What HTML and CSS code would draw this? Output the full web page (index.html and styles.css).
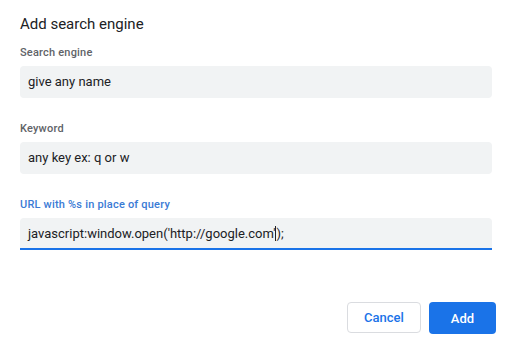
FILE: index.html
```html
<!DOCTYPE html>
<html lang="en">
<head>
    <meta charset="UTF-8">
    <meta name="viewport" content="width=device-width, initial-scale=1.0">
    <title>Add search engine</title>
    <link rel="stylesheet" href="styles.css">
</head>
<body>
    <div class="dialog">
        <h1 class="title">Add search engine</h1>

        <!-- Fields -->
        <div class="field">
            <label class="label">Search engine</label>
            <div class="input">give any name</div>
        </div>
        <div class="field">
            <label class="label">Keyword</label>
            <div class="input">any key ex: q or w</div>
        </div>
        <div class="field focused">
            <label class="label">URL with %s in place of query</label>
            <div class="input">javascript:window.open('http://google.com'<span class="caret"></span>);</div>
        </div>

        <!-- Buttons -->
        <div class="actions">
            <button class="btn cancel">Cancel</button>
            <button class="btn add">Add</button>
        </div>
    </div>
</body>
</html>
```

FILE: styles.css
```css
body { margin: 0; background: #fff; font-family: Roboto, "Liberation Sans", Arial, sans-serif; color: #202124; }
.dialog { padding: 14px 14px 13px 20px; }
.title { margin: 0 0 13px; font-size: 15px; line-height: 20px; font-weight: 400; color: #202124; }
.field { margin-bottom: 25px; margin-right: 0; width: 472px; }
.label { display: block; margin-bottom: 7px; font-size: 11px; line-height: 12px; font-weight: 500; color: #5f6368; letter-spacing: 0.2px; }
.input { height: 32px; box-sizing: border-box; padding: 0 8px; background: #f1f3f4; border-radius: 4px; font-size: 13px; line-height: 32px; color: #202124; white-space: nowrap; }
.focused .label { color: #3a7bd5; }
.focused .input { border-bottom: 2px solid #1a73e8; border-radius: 4px 4px 0 0; line-height: 31px; height: 32px; }
.caret { display: inline-block; width: 1px; height: 15px; background: #202124; vertical-align: -3px; }
.actions { display: flex; justify-content: flex-end; gap: 8px; margin-top: 52px; margin-right: -4px; width: 476px; }
.btn { height: 31px; border-radius: 4px; font-family: inherit; font-size: 13px; font-weight: 500; cursor: pointer; }
.cancel { width: 74px; background: #fff; color: #1a73e8; border: 1px solid #dadce0; }
.add { width: 67px; background: #1a73e8; color: #fff; border: none; height: 32px; }
```
